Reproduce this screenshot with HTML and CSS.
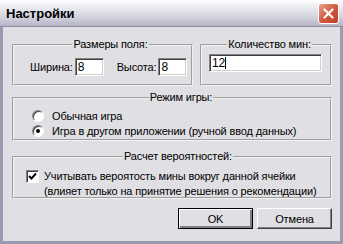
FILE: index.html
```html
<!DOCTYPE html>
<html lang="ru">
<head>
    <meta charset="UTF-8">
    <title>Настройки</title>
    <link rel="stylesheet" href="styles.css">
</head>
<body>
    <div class="window">
        <div class="titlebar">
            <span class="title">Настройки</span>
            <span class="close">
                <svg width="19" height="19" viewBox="0 0 19 19">
                    <path d="M5.5 5.5 L13.5 13.5 M13.5 5.5 L5.5 13.5" stroke="#fff" stroke-width="2.2" stroke-linecap="round"/>
                </svg>
            </span>
        </div>

        <div class="content">
            <div class="row">
                <fieldset class="group sizes">
                    <legend>Размеры поля:</legend>
                    <label class="field">Ширина: <span class="edit small">8</span></label>
                    <label class="field">Высота: <span class="edit small">8</span></label>
                </fieldset>
                <fieldset class="group mines">
                    <legend>Количество мин:</legend>
                    <span class="edit wide">12<span class="caret"></span></span>
                </fieldset>
            </div>

            <fieldset class="group mode">
                <legend>Режим игры:</legend>
                <div class="option"><span class="radio"></span>Обычная игра</div>
                <div class="option"><span class="radio checked"></span>Игра в другом приложении (ручной ввод данных)</div>
            </fieldset>

            <fieldset class="group calc">
                <legend>Расчет вероятностей:</legend>
                <div class="check-row">
                    <span class="check">
                        <svg width="9" height="9" viewBox="0 0 9 9">
                            <path d="M1 4 L3.5 6.5 L8 1.5" stroke="#000" stroke-width="2" fill="none"/>
                        </svg>
                    </span>
                    <span>Учитывать вероятость мины вокруг данной ячейки<br>(влияет только на принятие решения о рекомендации)</span>
                </div>
            </fieldset>

            <div class="buttons">
                <span class="btn default">OK</span>
                <span class="btn">Отмена</span>
            </div>
        </div>
    </div>
</body>
</html>
```

FILE: styles.css
```css
body {
    margin: 0;
    padding: 0;
    background-color: #e0dfe3;
    font-family: "Liberation Sans", Arial, sans-serif;
    font-size: 11px;
    letter-spacing: -0.15px;
    color: #000;
}

.window {
    width: 343px;
    height: 244px;
    box-sizing: border-box;
    border-left: 3px solid #9b9bb0;
    border-right: 3px solid #9b9bb0;
    border-bottom: 3px solid #9b9bb0;
    background-color: #e0dfe3;
}

/* title bar */
.titlebar {
    height: 26px;
    margin: 0 -3px;
    padding: 0 4px 0 6px;
    display: flex;
    align-items: center;
    justify-content: space-between;
    background: linear-gradient(#ffffff 0%, #e6e6ee 35%, #cfcfdc 70%, #b4b4c6 100%);
    border-bottom: 1px solid #8f8fa4;
}

.title {
    font-size: 13px;
    font-weight: bold;
    letter-spacing: 0;
    color: #000;
}

.close {
    width: 19px;
    height: 19px;
    border-radius: 3px;
    border: 1px solid #fff;
    background: linear-gradient(135deg, #e8a08a, #d0553a 55%, #c0412a);
    display: flex;
}

/* dialog body */
.content {
    padding: 11px 8px 0 9px;
}

.row {
    display: flex;
    gap: 7px;
}

.group {
    margin: 0;
    padding: 0;
    border: 2px groove #f2f2f2;
}

.group legend {
    margin: 0 auto;
    padding: 0 1px;
    line-height: 13px;
}

.sizes {
    width: 181px;
    height: 48px;
    box-sizing: border-box;
    display: flex;
    align-items: center;
    padding: 0 0 2px 16px;
    gap: 13px;
}

.mines {
    flex: 1;
    height: 48px;
    box-sizing: border-box;
    padding: 3px 0 0 7px;
}

.field {
    display: flex;
    align-items: center;
    gap: 2px;
}

.edit {
    display: inline-block;
    box-sizing: border-box;
    height: 18px;
    line-height: 14px;
    padding: 1px 2px;
    background-color: #fff;
    border: 1px solid;
    border-color: #808080 #fff #fff #808080;
    box-shadow: inset 1px 1px #404040, inset -1px -1px #d4d0c8;
    font-size: 12px;
}

.small {
    width: 29px;
}

.wide {
    width: 113px;
}

.caret {
    display: inline-block;
    width: 1px;
    height: 12px;
    background-color: #000;
    vertical-align: -2px;
}

.mode {
    margin-top: 5px;
    height: 50px;
    box-sizing: border-box;
    padding: 4px 0 0 18px;
}

.option {
    display: flex;
    align-items: center;
    height: 15px;
    gap: 8px;
}

.radio {
    width: 12px;
    height: 12px;
    box-sizing: border-box;
    border-radius: 50%;
    border: 1px solid;
    border-color: #808080 #fff #fff #808080;
    background-color: #fff;
    box-shadow: inset 1px 1px #404040;
    display: flex;
    align-items: center;
    justify-content: center;
}

.radio.checked::after {
    content: "";
    width: 4px;
    height: 4px;
    border-radius: 50%;
    background-color: #000;
}

.calc {
    margin-top: 9px;
    height: 49px;
    box-sizing: border-box;
    padding: 6px 0 0 12px;
}

.check-row {
    display: flex;
    gap: 5px;
    line-height: 15px;
}

.check {
    width: 13px;
    height: 13px;
    box-sizing: border-box;
    margin-top: 1px;
    border: 1px solid;
    border-color: #808080 #fff #fff #808080;
    background-color: #fff;
    box-shadow: inset 1px 1px #404040;
    display: flex;
    align-items: center;
    justify-content: center;
}

.buttons {
    display: flex;
    justify-content: flex-end;
    gap: 4px;
    margin-top: 9px;
}

.btn {
    width: 75px;
    height: 21px;
    box-sizing: border-box;
    display: flex;
    align-items: center;
    justify-content: center;
    border: 1px solid;
    border-color: #fff #404040 #404040 #fff;
    box-shadow: inset -1px -1px #808080;
    background-color: #e0dfe3;
}

.btn.default {
    border: 1px solid #000;
    box-shadow: inset 1px 1px #fff, inset -2px -2px #808080;
}
```
